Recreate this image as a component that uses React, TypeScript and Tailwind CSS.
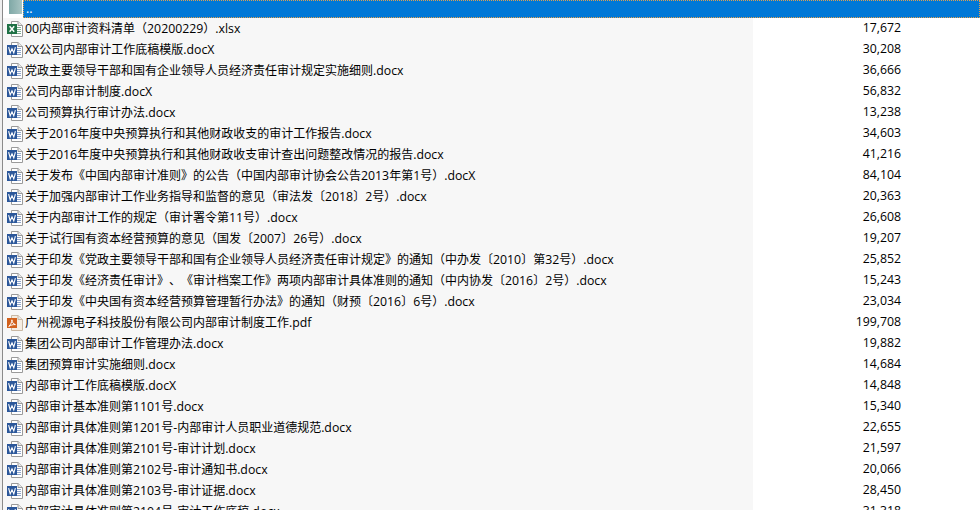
const rows: [string, string, string][] = [
  ["x", "00内部审计资料清单（20200229）.xlsx", "17,672"],
  ["w", "XX公司内部审计工作底稿模版.docX", "30,208"],
  ["w", "党政主要领导干部和国有企业领导人员经济责任审计规定实施细则.docx", "36,666"],
  ["w", "公司内部审计制度.docX", "56,832"],
  ["w", "公司预算执行审计办法.docx", "13,238"],
  ["w", "关于2016年度中央预算执行和其他财政收支的审计工作报告.docx", "34,603"],
  ["w", "关于2016年度中央预算执行和其他财政收支审计查出问题整改情况的报告.docx", "41,216"],
  ["w", "关于发布《中国内部审计准则》的公告（中国内部审计协会公告2013年第1号）.docX", "84,104"],
  ["w", "关于加强内部审计工作业务指导和监督的意见（审法发〔2018〕2号）.docx", "20,363"],
  ["w", "关于内部审计工作的规定（审计署令第11号）.docx", "26,608"],
  ["w", "关于试行国有资本经营预算的意见（国发〔2007〕26号）.docx", "19,207"],
  ["w", "关于印发《党政主要领导干部和国有企业领导人员经济责任审计规定》的通知（中办发〔2010〕第32号）.docx", "25,852"],
  ["w", "关于印发《经济责任审计》、《审计档案工作》两项内部审计具体准则的通知（中内协发〔2016〕2号）.docx", "15,243"],
  ["w", "关于印发《中央国有资本经营预算管理暂行办法》的通知（财预〔2016〕6号）.docx", "23,034"],
  ["p", "广州视源电子科技股份有限公司内部审计制度工作.pdf", "199,708"],
  ["w", "集团公司内部审计工作管理办法.docx", "19,882"],
  ["w", "集团预算审计实施细则.docx", "14,684"],
  ["w", "内部审计工作底稿模版.docX", "14,848"],
  ["w", "内部审计基本准则第1101号.docx", "15,340"],
  ["w", "内部审计具体准则第1201号-内部审计人员职业道德规范.docx", "22,655"],
  ["w", "内部审计具体准则第2101号-审计计划.docx", "21,597"],
  ["w", "内部审计具体准则第2102号-审计通知书.docx", "20,066"],
  ["w", "内部审计具体准则第2103号-审计证据.docx", "28,450"],
  ["w", "内部审计具体准则第2104号-审计工作底稿.docx", "31,318"],
];

function FileIcon({ kind }: { kind: string }) {
  const color = kind === "x" ? "#1e7145" : kind === "w" ? "#2b579a" : "#d2611c";
  const edge = kind === "p" ? "#c9b8a4" : "#9a9a9a";
  return (
    <svg width="16" height="16" viewBox="0 0 16 16" className="shrink-0">
      <path d="M4.5 0.5H11L15.5 4.5V15.5H4.5Z" fill={kind === "p" ? "#f5ede2" : "#fff"} stroke={edge} />
      <path d="M11 0.5V4.5H15.5" fill="#e8e8e8" stroke={edge} />
      {kind !== "p" && <path d="M10 6.5H14M10 8.5H14M10 10.5H14M10 12.5H14" stroke={kind === "x" ? "#7fae93" : "#8fa6cc"} />}
      <rect x="0" y="3" width="10" height="10" fill={color} />
      {kind === "x" && <path d="M2.6 5.2L7.2 10.8M7.2 5.2L2.6 10.8" stroke="#fff" strokeWidth="1.4" />}
      {kind === "w" && <path d="M1.6 5.2L3.2 10.8L5 6.8L6.8 10.8L8.4 5.2" stroke="#fff" strokeWidth="1.1" fill="none" />}
      {kind === "p" && <path d="M1.8 11.5C3.8 9.5 4.9 7 4.9 4.8C5.1 7 6.2 9 8.4 9.6C6 9.5 3.8 10 1.8 11.5Z" stroke="#fff" strokeWidth="1" fill="none" />}
    </svg>
  );
}

function Name({ text }: { text: string }) {
  const parts = text.split(/([\u3000-\u9fff\uff00-\uffef]+)/).filter(Boolean);
  return (
    <span className="[text-spacing-trim:space-all]">
      {parts.map((part, i) =>
        /[\u3000-\u9fff\uff00-\uffef]/.test(part) ? (
          <span key={i} className="text-[12px] font-['Noto_Sans_CJK_SC',sans-serif]">{part}</span>
        ) : (
          <span key={i}>{part}</span>
        )
      )}
    </span>
  );
}

export default function App() {
  return (
    <div className="h-[510px] w-[980px] overflow-hidden bg-white text-[12.3px] text-black font-['Open_Sans',sans-serif]">
      <div className="h-full border-l-2 border-l-[#efefef]">
        <div className="h-full border-l border-[#8a8a8a]">
          <div className="flex h-[18px] items-start pl-[6px]">
            <div className="h-[14px] w-[13px] shrink-0 bg-gradient-to-r from-[#7fa8a6] to-[#a8c4c2]" />
            <div className="ml-[1px] flex h-[18px] flex-1 items-center border border-dotted border-[#e0a050] bg-[#0078d7] pl-[2px] leading-none text-white">..</div>
          </div>
          {rows.map(([kind, name, size]) => (
            <div key={name} className="flex h-[21px] items-center">
              <div className="flex h-full w-[750px] shrink-0 items-center gap-[2px] whitespace-nowrap bg-[#f7f7f7] pl-[4px]">
                <FileIcon kind={kind} />
                <Name text={name} />
              </div>
              <div className="w-[148px] shrink-0 text-right">{size}</div>
            </div>
          ))}
        </div>
      </div>
    </div>
  );
}
